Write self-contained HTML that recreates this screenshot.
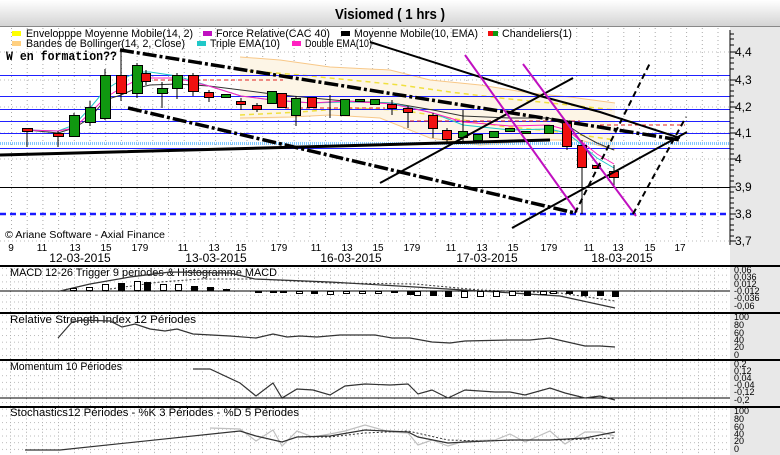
<!DOCTYPE html>
<html><head><meta charset="utf-8"><style>
body{margin:0;width:780px;height:455px;overflow:hidden;background:#fff;font-family:"Liberation Sans",sans-serif}
svg{display:block}
</style></head><body>
<svg width="780" height="455" viewBox="0 0 780 455" xmlns="http://www.w3.org/2000/svg" font-family="Liberation Sans, sans-serif">
<defs>
<linearGradient id="tb" x1="0" y1="0" x2="0" y2="1"><stop offset="0" stop-color="#ffffff"/><stop offset="1" stop-color="#d4d4d4"/></linearGradient>
<pattern id="gd" width="16" height="6.7" patternUnits="userSpaceOnUse" x="10" y="0">
<rect x="0" y="0" width="1" height="1" fill="#aaa"/><rect x="0" y="3" width="1" height="1" fill="#aaa"/>
<rect x="4" y="0" width="1" height="1" fill="#bbb"/><rect x="8" y="0" width="1" height="1" fill="#bbb"/><rect x="12" y="0" width="1" height="1" fill="#bbb"/>
</pattern>
<pattern id="gm" width="15.7" height="4" patternUnits="userSpaceOnUse" x="11" y="0">
<rect x="0" y="0" width="1" height="1" fill="#aaa"/>
</pattern>
</defs>
<rect width="780" height="455" fill="#fff"/>
<rect width="780" height="26" fill="url(#tb)"/>
<line x1="0" y1="26.5" x2="780" y2="26.5" stroke="#888"/>
<text x="335" y="19" font-weight="bold" font-size="15" textLength="110" lengthAdjust="spacingAndGlyphs">Visiomed  ( 1 hrs )</text>
<rect x="730" y="27" width="50" height="428" fill="#e8e8e8"/>
<rect x="0" y="27" width="730" height="212" fill="url(#gm)"/>
<g stroke="#bbb" stroke-dasharray="1,3">
<line x1="0" y1="52" x2="730" y2="52"/><line x1="0" y1="80" x2="730" y2="80"/><line x1="0" y1="107" x2="730" y2="107"/><line x1="0" y1="133" x2="730" y2="133"/><line x1="0" y1="159" x2="730" y2="159"/><line x1="0" y1="241" x2="730" y2="241"/>
</g>
<polygon points="240,57 280,60 330,67 390,70 430,80 480,85 530,93 570,97 615,103 615,148 580,140 540,140 480,145 430,138 380,118 330,115 290,118 240,120" fill="#fdf5e6"/>
<polyline points="240,57 280,60 330,67 390,70 430,80 480,85 530,93 570,97 615,103" fill="none" stroke="#f8c888" stroke-width="1"/>
<polyline points="240,118 290,117 330,115 380,118 430,138 480,145 540,140 580,140 615,150" fill="none" stroke="#f8c888"/>
<polyline points="240,70 300,75 350,80 400,85 450,92 500,98 560,104 615,110" fill="none" stroke="#f0e040" stroke-dasharray="5,4" stroke-width="1.5"/>
<polyline points="240,115 300,112 350,108 400,110 450,118 500,126 560,132 615,140" fill="none" stroke="#f0e040" stroke-dasharray="5,4" stroke-width="1.5"/>
<g stroke="#2020ff" stroke-width="1">
<line x1="0" y1="75.5" x2="730" y2="75.5"/><line x1="0" y1="96.5" x2="730" y2="96.5"/><line x1="0" y1="109.5" x2="730" y2="109.5"/><line x1="0" y1="121.5" x2="730" y2="121.5"/><line x1="0" y1="133.5" x2="730" y2="133.5"/><line x1="0" y1="148.5" x2="730" y2="148.5"/>
</g>
<line x1="0" y1="143.5" x2="730" y2="143.5" stroke="#80c8ff" stroke-width="3" stroke-dasharray="1,1"/>
<line x1="0" y1="187.5" x2="730" y2="187.5" stroke="#000"/>
<line x1="0" y1="214" x2="730" y2="214" stroke="#1a1aff" stroke-width="2.5" stroke-dasharray="6,4"/>
<g stroke="#e02020" stroke-dasharray="4,3">
<line x1="140" y1="80" x2="283" y2="80"/><line x1="285" y1="108" x2="385" y2="108"/><line x1="410" y1="121" x2="580" y2="121"/><line x1="600" y1="125" x2="685" y2="125"/>
</g>
<polyline points="0,155 300,147 550,140" fill="none" stroke="#000" stroke-width="3"/>
<polyline points="27,130 58,133 74,128 90,118 105,100 121,95 137,88 150,85 177,84 209,86 241,90 272,94 312,98 345,101 392,103 433,110 463,116 510,118 549,118 567,125 582,135 597,143 614,150" fill="none" stroke="#333" stroke-width="1"/>
<polyline points="27,130 58,131 74,125 90,108 105,90 121,80 137,72 150,72 177,76 209,86 241,96 272,100 312,103 345,102 392,103 433,113 463,125 510,130 549,129 567,133 582,145 597,158 614,168" fill="none" stroke="#20c8c8" stroke-width="1"/>
<polyline points="27,130 58,131 74,128 90,113 105,98 121,88 137,80 150,78 177,78 209,86 241,96 272,100 312,103 345,101 392,104 433,113 463,122 510,126 549,125 567,130 582,142 597,154 614,164" fill="none" stroke="#ff20c0" stroke-width="1"/>
<g stroke="#000" stroke-width="1">
<line x1="27" y1="128" x2="27" y2="147"/><line x1="58" y1="131" x2="58" y2="147"/><line x1="74" y1="113" x2="74" y2="137"/><line x1="90" y1="101" x2="90" y2="126"/><line x1="105" y1="69" x2="105" y2="120"/><line x1="121" y1="52" x2="121" y2="101"/><line x1="137" y1="63" x2="137" y2="98"/><line x1="146" y1="70" x2="146" y2="85"/><line x1="162" y1="82" x2="162" y2="108"/><line x1="177" y1="73" x2="177" y2="99"/><line x1="193" y1="73" x2="193" y2="96"/><line x1="209" y1="90" x2="209" y2="102"/><line x1="241" y1="98" x2="241" y2="110"/><line x1="257" y1="103" x2="257" y2="112"/><line x1="296" y1="96" x2="296" y2="126"/><line x1="330" y1="95" x2="330" y2="118"/><line x1="392" y1="100" x2="392" y2="115"/><line x1="408" y1="106" x2="408" y2="128"/><line x1="433" y1="113" x2="433" y2="138"/><line x1="447" y1="128" x2="447" y2="143"/><line x1="463" y1="110" x2="463" y2="143"/><line x1="567" y1="120" x2="567" y2="150"/><line x1="582" y1="140" x2="582" y2="214"/><line x1="614" y1="165" x2="614" y2="187"/>
</g>
<g stroke="#000" stroke-width="1">
<rect x="22.5" y="128.5" width="10" height="3" fill="#f01010"/>
<rect x="53.5" y="133.5" width="10" height="3" fill="#f01010"/>
<rect x="69.5" y="115.5" width="10" height="21" fill="#109810"/>
<rect x="85.5" y="107.5" width="10" height="15" fill="#109810"/>
<rect x="100.5" y="75.5" width="10" height="43" fill="#109810"/>
<rect x="116.5" y="75.5" width="10" height="18" fill="#f01010"/>
<rect x="132.5" y="65.5" width="10" height="28" fill="#109810"/>
<rect x="141.5" y="73.5" width="9" height="8" fill="#f01010"/>
<rect x="157.5" y="88.5" width="10" height="5" fill="#109810"/>
<rect x="172.5" y="75.5" width="10" height="13" fill="#109810"/>
<rect x="188.5" y="75.5" width="10" height="16" fill="#f01010"/>
<rect x="204.5" y="92.5" width="9" height="5" fill="#f01010"/>
<rect x="221.5" y="94.5" width="9" height="3" fill="#109810"/>
<rect x="236.5" y="101.5" width="9" height="3" fill="#f01010"/>
<rect x="252.5" y="105.5" width="9" height="4" fill="#f01010"/>
<rect x="267.5" y="91.5" width="9" height="12" fill="#109810"/>
<rect x="277.5" y="93.5" width="9" height="14" fill="#f01010"/>
<rect x="291.5" y="98.5" width="9" height="17" fill="#109810"/>
<rect x="307.5" y="97.5" width="9" height="10" fill="#f01010"/>
<rect x="340.5" y="99.5" width="9" height="16" fill="#109810"/>
<rect x="355.5" y="99.5" width="9" height="2" fill="#109810"/>
<rect x="370.5" y="99.5" width="9" height="5" fill="#109810"/>
<rect x="387.5" y="104.5" width="9" height="4" fill="#f01010"/>
<rect x="403.5" y="108.5" width="9" height="4" fill="#f01010"/>
<rect x="428.5" y="115.5" width="9" height="13" fill="#f01010"/>
<rect x="442.5" y="130.5" width="9" height="9" fill="#f01010"/>
<rect x="458.5" y="131.5" width="9" height="6" fill="#109810"/>
<rect x="473.5" y="134.5" width="9" height="6" fill="#109810"/>
<rect x="489.5" y="131.5" width="9" height="6" fill="#109810"/>
<rect x="505.5" y="128.5" width="9" height="3" fill="#109810"/>
<rect x="521.5" y="131.5" width="9" height="2" fill="#109810"/>
<rect x="544.5" y="125.5" width="9" height="8" fill="#109810"/>
<rect x="562.5" y="121.5" width="9" height="25" fill="#f01010"/>
<rect x="577.5" y="145.5" width="9" height="22" fill="#f01010"/>
<rect x="592.5" y="165.5" width="8" height="3" fill="#f01010"/>
<rect x="609.5" y="171.5" width="9" height="6" fill="#f01010"/>
</g>
<line x1="120" y1="50" x2="680" y2="140" stroke="#000" stroke-width="3.5" stroke-dasharray="14,3,3,3"/>
<line x1="128" y1="108" x2="575" y2="213" stroke="#000" stroke-width="3.5" stroke-dasharray="14,3,3,3"/>
<polyline points="370,42 540,96 600,112 680,138" fill="none" stroke="#000" stroke-width="2"/>
<line x1="380" y1="183" x2="573" y2="78" stroke="#000" stroke-width="2"/>
<line x1="512" y1="228" x2="687" y2="132" stroke="#000" stroke-width="2"/>
<line x1="465" y1="55" x2="577" y2="212" stroke="#c010c0" stroke-width="2"/>
<line x1="523" y1="64" x2="636" y2="216" stroke="#c010c0" stroke-width="2"/>
<line x1="575" y1="213" x2="650" y2="63" stroke="#000" stroke-width="2" stroke-dasharray="6,4"/>
<line x1="633" y1="214" x2="686" y2="117" stroke="#000" stroke-width="2" stroke-dasharray="6,4"/>
<g font-size="11" lengthAdjust="spacingAndGlyphs">
<rect x="12" y="31" width="9" height="5" fill="#ffff00"/><text x="26" y="37" textLength="167" lengthAdjust="spacingAndGlyphs">Envelopppe Moyenne Mobile(14, 2)</text>
<rect x="203" y="31" width="9" height="5" fill="#c010c0"/><text x="216" y="37" textLength="114" lengthAdjust="spacingAndGlyphs">Force Relative(CAC 40)</text>
<rect x="341" y="31" width="9" height="5" fill="#000"/><text x="354" y="37" textLength="124" lengthAdjust="spacingAndGlyphs">Moyenne Mobile(10, EMA)</text>
<rect x="488" y="31" width="5" height="5" fill="#f01010"/><rect x="493" y="31" width="5" height="5" fill="#109810"/><text x="502" y="37" textLength="70" lengthAdjust="spacingAndGlyphs">Chandeliers(1)</text>
<rect x="12" y="41" width="9" height="5" fill="#ffd080"/><text x="26" y="47" textLength="159" lengthAdjust="spacingAndGlyphs">Bandes de Bollinger(14, 2, Close)</text>
<rect x="197" y="41" width="9" height="5" fill="#20c8c8"/><text x="210" y="47" textLength="70" lengthAdjust="spacingAndGlyphs">Triple EMA(10)</text>
<rect x="292" y="41" width="9" height="5" fill="#ff20c0"/><text x="305" y="47" textLength="67" lengthAdjust="spacingAndGlyphs">Double EMA(10)</text>
</g>
<text x="6" y="60" font-family="Liberation Mono, monospace" font-weight="bold" font-size="12.5" textLength="111" lengthAdjust="spacingAndGlyphs">W en formation??</text>
<text x="5" y="238" font-size="10" textLength="160" lengthAdjust="spacingAndGlyphs">© Ariane Software - Axial Finance</text>
<line x1="730" y1="30" x2="730" y2="245" stroke="#000"/>
<g font-size="12">
<text x="735" y="56">4,4</text><text x="735" y="84">4,3</text><text x="735" y="111">4,2</text><text x="735" y="137">4,1</text><text x="735" y="163">4</text><text x="735" y="191">3,9</text><text x="735" y="218">3,8</text><text x="735" y="245">3,7</text>
</g>
<path d="M730 34h4M730 39h4M730 45h4M730 52h6M730 58h4M730 63h4M730 69h4M730 80h6M730 85h4M730 91h4M730 96h4M730 102h4M730 107h6M730 112h4M730 118h4M730 123h4M730 128h4M730 133h6M730 139h4M730 144h4M730 149h4M730 154h4M730 159h6M730 165h4M730 170h4M730 176h4M730 181h4M730 187h6M730 192h4M730 198h4M730 203h4M730 208h4M730 214h6M730 219h4M730 225h4M730 230h4M730 236h4M730 241h6" stroke="#000"/>
<g font-size="10" text-anchor="middle">
<text x="11" y="251">9</text><text x="42" y="251">11</text><text x="75" y="251">13</text><text x="106" y="251">15</text><text x="140" y="251">179</text><text x="183" y="251">11</text><text x="214" y="251">13</text><text x="241" y="251">15</text><text x="279" y="251">179</text><text x="316" y="251">11</text><text x="347" y="251">13</text><text x="378" y="251">15</text><text x="412" y="251">179</text><text x="451" y="251">11</text><text x="482" y="251">13</text><text x="513" y="251">15</text><text x="549" y="251">179</text><text x="589" y="251">11</text><text x="618" y="251">13</text><text x="650" y="251">15</text><text x="680" y="251">17</text>
</g>
<g font-size="12" text-anchor="middle">
<text x="80" y="262">12-03-2015</text><text x="216" y="262">13-03-2015</text><text x="351" y="262">16-03-2015</text><text x="487" y="262">17-03-2015</text><text x="622" y="262">18-03-2015</text>
</g>
<rect x="0" y="267" width="730" height="188" fill="url(#gd)"/>
<g stroke="#000" stroke-width="2">
<line x1="0" y1="266" x2="780" y2="266"/><line x1="0" y1="313" x2="780" y2="313"/><line x1="0" y1="360" x2="780" y2="360"/><line x1="0" y1="407" x2="780" y2="407"/>
</g>
<line x1="0" y1="291" x2="730" y2="291" stroke="#000"/>
<line x1="0" y1="398" x2="730" y2="398" stroke="#000"/>
<g font-size="11">
<text x="10" y="276" textLength="267" lengthAdjust="spacingAndGlyphs">MACD 12-26   Trigger 9 periodes &amp; Histogramme MACD</text>
<text x="10" y="323" textLength="186" lengthAdjust="spacingAndGlyphs">Relative Strength Index 12 Périodes</text>
<text x="10" y="370" textLength="112" lengthAdjust="spacingAndGlyphs">Momentum 10 Périodes</text>
<text x="10" y="416" textLength="289" lengthAdjust="spacingAndGlyphs">Stochastics12 Périodes  -  %K 3 Périodes  -  %D 5 Périodes</text>
</g>
<polyline points="60,291 90,284 130,277 170,272 230,273 255,279 330,282 415,287 480,291 560,296 615,308" fill="none" stroke="#333" stroke-width="1.2"/>
<polyline points="110,289 160,282 200,279 255,279 330,283 415,284 480,290 560,293 615,301" fill="none" stroke="#333" stroke-dasharray="2,2"/>
<g stroke="#000" fill="#fff">
<rect x="70.5" y="288.5" width="6" height="2"/><rect x="86.5" y="287.5" width="6" height="3"/><rect x="102.5" y="284.5" width="6" height="6"/><rect x="118.5" y="283.5" width="6" height="7" fill="#000"/><rect x="134.5" y="281.5" width="6" height="9"/><rect x="144.5" y="282.5" width="6" height="8" fill="#000"/><rect x="160.5" y="284.5" width="6" height="6"/><rect x="175.5" y="284.5" width="6" height="6"/><rect x="191.5" y="286.5" width="6" height="4" fill="#000"/><rect x="207.5" y="287.5" width="6" height="3" fill="#000"/><rect x="223.5" y="289.5" width="6" height="1"/>
<rect x="255.5" y="291.5" width="6" height="1" fill="#000"/><rect x="270.5" y="291.5" width="6" height="1" fill="#000"/><rect x="280.5" y="291.5" width="6" height="1" fill="#000"/><rect x="296.5" y="291.5" width="6" height="2"/><rect x="311.5" y="291.5" width="6" height="2" fill="#000"/><rect x="327.5" y="291.5" width="6" height="3"/><rect x="343.5" y="291.5" width="6" height="2"/><rect x="359.5" y="291.5" width="6" height="2"/><rect x="375.5" y="291.5" width="6" height="2"/><rect x="391.5" y="291.5" width="6" height="1" fill="#000"/><rect x="407.5" y="291.5" width="6" height="3" fill="#000"/><rect x="414.5" y="291.5" width="6" height="4"/><rect x="430.5" y="291.5" width="6" height="4" fill="#000"/><rect x="445.5" y="291.5" width="6" height="5" fill="#000"/><rect x="461.5" y="291.5" width="6" height="6"/><rect x="477.5" y="291.5" width="6" height="5"/><rect x="493.5" y="291.5" width="6" height="5"/><rect x="509.5" y="291.5" width="6" height="4"/><rect x="524.5" y="291.5" width="6" height="4" fill="#000"/><rect x="540.5" y="291.5" width="6" height="3"/><rect x="550.5" y="291.5" width="6" height="2"/><rect x="566.5" y="291.5" width="6" height="2" fill="#000"/><rect x="581.5" y="291.5" width="6" height="4" fill="#000"/><rect x="597.5" y="291.5" width="6" height="4" fill="#000"/><rect x="612.5" y="291.5" width="6" height="5" fill="#000"/>
</g>
<polyline points="58,338 72,322 82,320 110,321 122,327 135,324 150,329 165,331 177,329 193,334 230,336 256,338 273,334 287,337 300,336 317,337 340,335 375,335 392,338 410,338 432,342 450,343 465,341 510,340 530,340 550,338 563,341 585,346 600,346 615,347" fill="none" stroke="#333" stroke-width="1.2"/>
<polyline points="193,369 210,369 240,383 256,396 273,383 282,398 297,389 313,390 330,395 345,386 365,384 390,385 408,384 418,394 432,390 448,398 465,390 495,392 510,392 525,395 550,388 565,393 585,398 600,396 615,400" fill="none" stroke="#333" stroke-width="1.2"/>
<polyline points="210,428 240,429 256,441 273,430 282,446 297,431 313,437 330,434 345,431 365,425 390,432 408,433 418,445 432,440 448,446 465,441 495,440 510,434 525,442 550,431 565,444 585,432 600,432 615,436" fill="none" stroke="#c0c0c0" stroke-width="1.2"/>
<polyline points="25,450 60,450 240,431 256,436 282,442 297,437 330,436 365,430 408,432 418,437 448,443 465,442 510,440 550,440 585,438 615,432" fill="none" stroke="#333" stroke-width="1.2"/>
<polyline points="297,437 330,437 365,433 408,431 448,440 480,441 520,440 560,440 615,438" fill="none" stroke="#333" stroke-dasharray="2,2"/>
<g font-size="9">
<text x="734" y="273">0,06</text><text x="734" y="280">0,036</text><text x="734" y="287">0,012</text><text x="734" y="294">-0,012</text><text x="734" y="301">-0,036</text><text x="734" y="309">-0,06</text>
<text x="734" y="320">100</text><text x="734" y="328">80</text><text x="734" y="336">60</text><text x="734" y="343">40</text><text x="734" y="350">20</text><text x="734" y="358">0</text>
<text x="734" y="367">0,2</text><text x="734" y="374">0,12</text><text x="734" y="381">0,04</text><text x="734" y="388">-0,04</text><text x="734" y="395">-0,12</text><text x="734" y="403">-0,2</text>
<text x="734" y="414">100</text><text x="734" y="422">80</text><text x="734" y="430">60</text><text x="734" y="437">40</text><text x="734" y="444">20</text><text x="734" y="452">0</text>
</g>
</svg>
</body></html>
